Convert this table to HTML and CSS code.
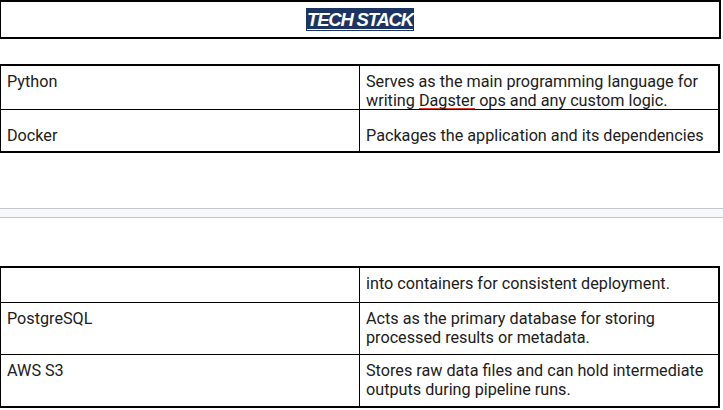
FILE: index.html
```html
<!DOCTYPE html>
<html lang="en">
<head>
<meta charset="utf-8">
<title>Tech Stack</title>
<link rel="stylesheet" href="styles.css">
</head>
<body>
  <header class="title-box">
    <span class="title">TECH STACK</span>
  </header>

  <div class="tbl tbl-first">
    <div class="row row-a">
      <div class="cell">Python</div>
      <div class="cell cell-desc">Serves as the main programming language for<br>writing <span class="spell">Dagster</span> ops and any custom logic.</div>
    </div>
    <div class="row row-b">
      <div class="cell">Docker</div>
      <div class="cell cell-desc">Packages the application and its dependencies</div>
    </div>
  </div>

  <div class="page-break"></div>

  <div class="tbl tbl-second">
    <div class="row row-c">
      <div class="cell"></div>
      <div class="cell cell-desc">into containers for consistent deployment.</div>
    </div>
    <div class="row row-d">
      <div class="cell">PostgreSQL</div>
      <div class="cell cell-desc">Acts as the primary database for storing<br>processed results or metadata.</div>
    </div>
    <div class="row row-d">
      <div class="cell">AWS S3</div>
      <div class="cell cell-desc">Stores raw data files and can hold intermediate<br>outputs during pipeline runs.</div>
    </div>
  </div>
</body>
</html>
```

FILE: styles.css
```css
html, body {
  margin: 0;
  padding: 0;
  background: #ffffff;
}

body {
  width: 723px;
  font-family: Roboto, "Liberation Sans", sans-serif;
  font-size: 16.2px;
  line-height: 19px;
  color: #202020;
}

.title-box {
  box-sizing: border-box;
  width: 721px;
  height: 39px;
  border: 2px solid #000;
  border-left-width: 1.5px;
  padding-top: 6px;
  text-align: center;
}

.title {
  display: inline-block;
  height: 23px;
  line-height: 23px;
  padding: 0 1px;
  background: #1c3461;
  color: #ffffff;
  font-family: "Liberation Sans", Arial, sans-serif;
  font-size: 18.5px;
  font-weight: bold;
  font-style: italic;
  letter-spacing: -1.2px;
  text-decoration: underline;
  text-decoration-thickness: 1px;
  text-underline-offset: 3px;
}

.tbl {
  box-sizing: border-box;
  width: 720px;
  border: 2px solid #000;
  border-left-width: 1.5px;
}

.tbl-first {
  margin-top: 25px;
}

.tbl-second {
  margin-top: 48px;
}

.row {
  display: grid;
  grid-template-columns: 358px 1fr;
  border-top: 1px solid #000;
}

.row:first-child {
  border-top: 0;
}

.cell {
  padding: 0 6px;
  white-space: nowrap;
}

.cell-desc {
  border-left: 1px solid #000;
}

.row-a { height: 43px; }
.row-a .cell { padding-top: 6px; }

.row-b { height: 41px; }
.row-b .cell { padding-top: 16px; }

.row-c { height: 34px; }
.row-c .cell { padding-top: 6px; }

.row-d { height: 51px; }
.row-d .cell { padding-top: 6px; }

.spell {
  background-image: url("data:image/svg+xml;utf8,<svg xmlns='http://www.w3.org/2000/svg' width='4' height='3'><path d='M0 2 L1 1 L2 2 L3 1 L4 2' fill='none' stroke='%23e3341f' stroke-width='1'/></svg>");
  background-repeat: repeat-x;
  background-position: 0 100%;
  background-size: 4px 3px;
}

.page-break {
  margin-top: 55px;
  width: 723px;
  height: 8px;
  background: #f7f8fb;
  border-top: 1px solid #c6c7ca;
  border-bottom: 1px solid #c6c7ca;
}
```
